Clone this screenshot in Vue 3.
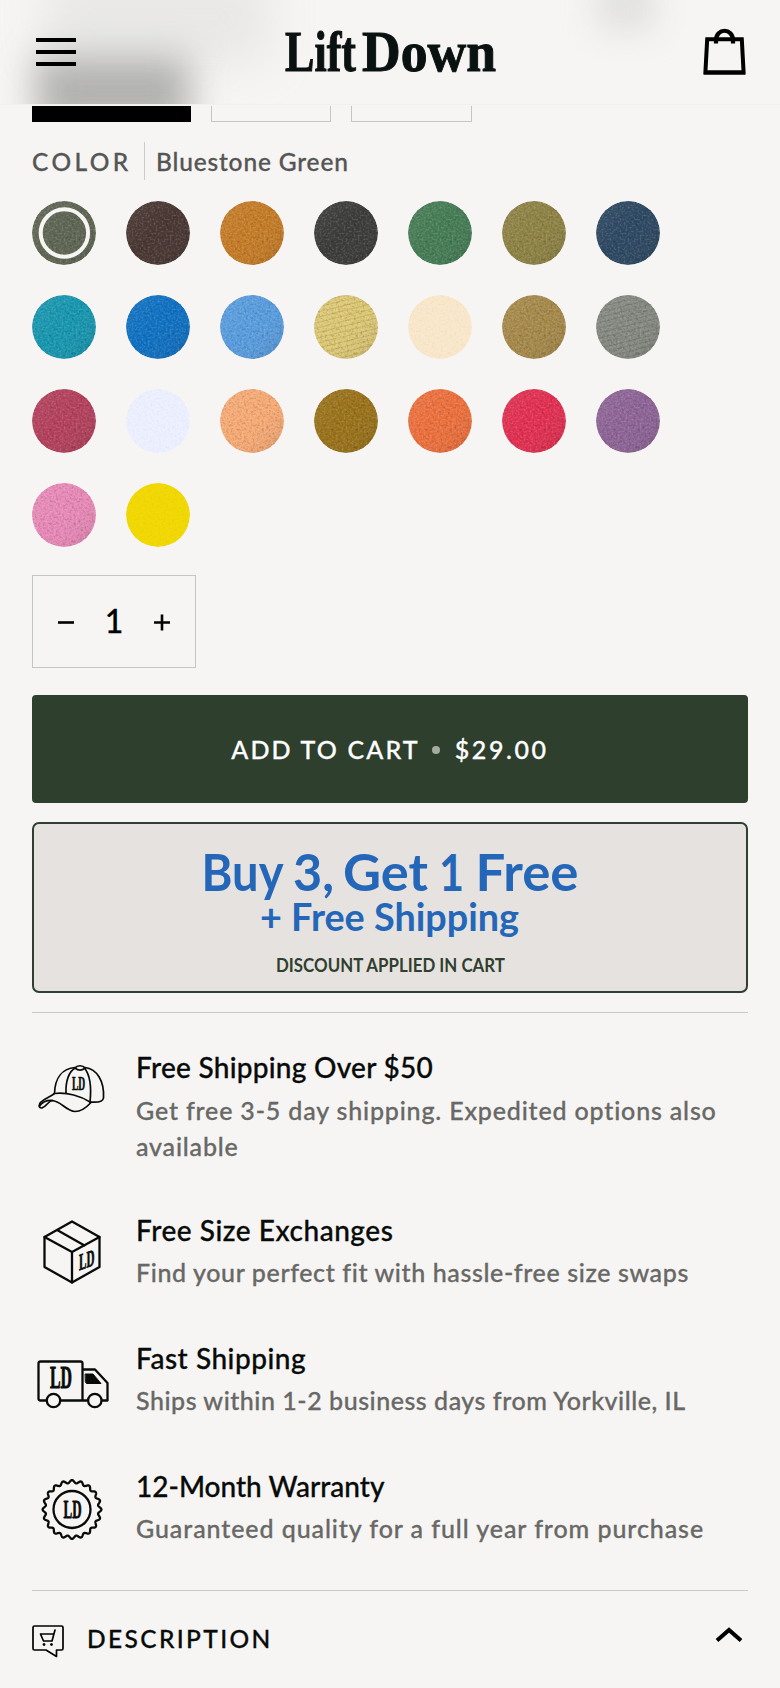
<script setup>
const swatches = [
  { name: 'Bluestone Green', color: '#5c6350', selected: true },
  { name: 'Brown', color: '#46332f' },
  { name: 'Burnt Orange', color: '#c67a22' },
  { name: 'Charcoal', color: '#383937' },
  { name: 'Green', color: '#427b52' },
  { name: 'Moss', color: '#8d8141' },
  { name: 'Navy', color: '#294560' },
  { name: 'Teal', color: '#1296b0' },
  { name: 'Royal', color: '#0a6fc3' },
  { name: 'Sky', color: '#569ce0' },
  { name: 'Butter', color: '#e0ca73', rib: true },
  { name: 'Ivory', color: '#fae8cd', pale: true },
  { name: 'Khaki', color: '#a68847' },
  { name: 'Grey', color: '#858980', rib: true },
  { name: 'Crimson', color: '#b43d5a' },
  { name: 'White', color: '#ecf0ff', pale: true },
  { name: 'Melon', color: '#f9aa73' },
  { name: 'Mustard', color: '#997015' },
  { name: 'Orange', color: '#ef6e39' },
  { name: 'Red', color: '#e42b4e' },
  { name: 'Violet', color: '#8d6296' },
  { name: 'Pink', color: '#ea88b8' },
  { name: 'Yellow', color: '#f2d905', pale: true },
]

const features = [
  { icon: 'cap', title: 'Free Shipping Over $50', text: 'Get free 3-5 day shipping. Expedited options also available' },
  { icon: 'box', title: 'Free Size Exchanges', text: 'Find your perfect fit with hassle-free size swaps' },
  { icon: 'truck', title: 'Fast Shipping', text: 'Ships within 1-2 business days from Yorkville, IL' },
  { icon: 'badge', title: '12-Month Warranty', text: 'Guaranteed quality for a full year from purchase' },
]

// Scalloped outline of the warranty badge.
const lobes = 20
const points = []
for (let i = 0; i < 360; i++) {
  const a = (i / 360) * Math.PI * 2
  const r = 27.9 + 1.5 * Math.cos(lobes * a)
  points.push(`${(40 + r * Math.cos(a)).toFixed(2)},${(40 + r * Math.sin(a)).toFixed(2)}`)
}
const scallop = points.join(' ')
</script>

<template>
  <div class="page">
    <svg class="defs" width="0" height="0" aria-hidden="true">
      <filter id="grain" x="0" y="0" width="100%" height="100%">
        <feTurbulence type="fractalNoise" baseFrequency="0.45" numOctaves="3" seed="4" />
        <feColorMatrix values="0 0 0 0 0  0 0 0 0 0  0 0 0 0 0  2.2 0 0 0 -0.95" />
      </filter>
      <filter id="glint" x="0" y="0" width="100%" height="100%">
        <feTurbulence type="fractalNoise" baseFrequency="0.5" numOctaves="2" seed="9" />
        <feColorMatrix values="0 0 0 0 1  0 0 0 0 1  0 0 0 0 1  0 2.2 0 0 -1" />
      </filter>
      <linearGradient id="shade" x1="0" y1="0" x2="1" y2="1">
        <stop offset="0" stop-color="#fff" stop-opacity=".08" />
        <stop offset=".5" stop-color="#fff" stop-opacity=".02" />
        <stop offset="1" stop-color="#000" stop-opacity=".12" />
      </linearGradient>
      <pattern id="ribs" width="12" height="5" patternUnits="userSpaceOnUse" patternTransform="rotate(-14)">
        <path d="M0 2.5H12" stroke="#000" stroke-width="1" stroke-opacity=".1" />
      </pattern>
      <clipPath id="round"><circle cx="32" cy="32" r="32" /></clipPath>
    </svg>

    <header class="header">
      <i class="haze haze-pill"></i>
      <i class="haze haze-top"></i>
      <i class="haze haze-right"></i>
      <button class="menu" aria-label="Menu"><span></span><span></span><span></span></button>
      <svg class="logo" width="220" height="90" viewBox="0 0 220 90">
        <text x="4" y="71" textLength="71" lengthAdjust="spacingAndGlyphs">Lift</text>
        <text x="81" y="71" textLength="134" lengthAdjust="spacingAndGlyphs">Down</text>
      </svg>
      <svg class="bag" width="44" height="48" viewBox="0 0 44 48" fill="none" stroke="#000">
        <path d="M4.2 11.2H38.8L40.6 44.5H2.4Z" stroke-width="4" />
        <path d="M1 44.6H42" stroke-width="4" />
        <path d="M13 15.5V12.5C13 -0.5 30 -0.5 30 12.5V15.5" stroke-width="4.2" />
      </svg>
    </header>

    <div class="sizes"><span class="on"></span><span></span><span></span></div>

    <main class="content">
      <div class="option">
        <span class="option-name">COLOR</span>
        <span class="option-value">Bluestone Green</span>
      </div>

      <div class="swatches">
        <svg v-for="s in swatches" :key="s.name" width="64" height="64" viewBox="0 0 64 64" :aria-label="s.name">
          <g clip-path="url(#round)">
            <circle cx="32" cy="32" r="32" :fill="s.color" />
            <g :opacity="s.pale ? 0.04 : 0.2">
              <rect width="64" height="64" filter="url(#grain)" />
              <rect width="64" height="64" filter="url(#glint)" />
            </g>
            <rect v-if="s.rib" width="64" height="64" fill="url(#ribs)" />
            <rect v-if="!s.pale" width="64" height="64" fill="url(#shade)" />
          </g>
          <circle v-if="s.selected" cx="32.4" cy="32" r="23.7" fill="none" stroke="#f6f5f3" stroke-width="4" />
        </svg>
      </div>

      <div class="quantity">
        <svg width="18" height="18" viewBox="0 0 18 18"><path d="M1 9.5H17" stroke="#000" stroke-width="2.6" /></svg>
        <span>1</span>
        <svg width="18" height="18" viewBox="0 0 18 18"><path d="M1 9.5H17M9 1.5V17.5" stroke="#000" stroke-width="2.6" /></svg>
      </div>

      <button class="cart">
        <span class="cart-label">ADD TO CART</span><i></i><span class="cart-price">$29.00</span>
      </button>

      <div class="promo">
        <svg width="712" height="167" viewBox="34 824 712 167">
          <g class="offer" font-size="51.5">
            <text x="201.5" y="890.5" textLength="82" lengthAdjust="spacingAndGlyphs">Buy</text>
            <text x="293" y="890.5" textLength="41" lengthAdjust="spacingAndGlyphs">3,</text>
            <text x="343" y="890.5" textLength="85" lengthAdjust="spacingAndGlyphs">Get</text>
            <text x="439" y="890.5" textLength="25" lengthAdjust="spacingAndGlyphs">1</text>
            <text x="475.5" y="890.5" textLength="103" lengthAdjust="spacingAndGlyphs">Free</text>
          </g>
          <text class="offer" x="260" y="931" font-size="37.5" textLength="259" lengthAdjust="spacingAndGlyphs">+ Free Shipping</text>
          <text class="note" x="276" y="971.5" font-size="18.6" textLength="229" lengthAdjust="spacingAndGlyphs">DISCOUNT APPLIED IN CART</text>
        </svg>
      </div>

      <section class="features">
        <article v-for="f in features" :key="f.icon" :class="['feature', f.icon]">
          <svg v-if="f.icon === 'cap'" class="icon" width="80" height="80" viewBox="0 1 80 80">
            <g stroke-width="1.7">
              <path d="M22.5 45.5C23 29 31 20.5 43 19.5" />
              <path d="M53 19.5C65 21 72.5 33 71.5 50C71 54 64 54.5 58.5 54" />
              <path d="M34 45C33.5 33 37 23 43.5 20" />
              <path d="M52.5 20C58 27 59.5 40 58 54" />
              <path d="M43 20C45 17 51 17 53 20C50 22.5 46 22.5 43 20Z" />
              <path d="M22.5 45.5C35 44 49 48 59 54.5C54 60 49 63.5 43 63.5C34 63 29 53 20 52.5C16 53.5 13.5 59.5 9.5 60C6.5 60 6.5 56 9 54C13 50 18 49 22.5 45.5Z" />
              <path d="M7.5 58C11 53 15 52 21 52.5" />
            </g>
            <g transform="translate(40 29.5) scale(.6)"><text y="21" textLength="22" lengthAdjust="spacingAndGlyphs">LD</text></g>
          </svg>
          <svg v-else-if="f.icon === 'box'" class="icon" width="80" height="80" viewBox="0 0 80 80">
            <g stroke-width="2.3">
              <path d="M40 9.5L67.5 25V55L40 70.5L12.5 55V25Z" />
              <path d="M12.5 25L40 40L67.5 25M40 40V70.5M26 18.5L52.5 33.5" />
            </g>
            <g transform="translate(47 42.5) skewY(-20) scale(.7 .76)"><text y="21" textLength="22" lengthAdjust="spacingAndGlyphs">LD</text></g>
          </svg>
          <svg v-else-if="f.icon === 'truck'" class="icon" width="80" height="80" viewBox="0 0 80 80">
            <g stroke-width="2.3">
              <path d="M14 60.5H8.5Q6.5 60.5 6.5 58.5V23.5Q6.5 21.5 8.5 21.5H48.5Q50.5 21.5 50.5 23.5V60.5H29M50.5 60.5H56M70 60.5H75.5V43L63 29.5H50.5" />
              <circle cx="21.5" cy="60.5" r="6.7" /><circle cx="62.8" cy="60.5" r="6.7" />
            </g>
            <path class="solid" d="M53.5 34H61L69 43.5H54.5L53.5 42Z" />
            <g transform="translate(18 27)"><text y="21" textLength="22" lengthAdjust="spacingAndGlyphs">LD</text></g>
          </svg>
          <svg v-else class="icon" width="80" height="80" viewBox="0 -1.5 80 80">
            <g stroke-width="2.3"><polygon :points="scallop" /><circle cx="40" cy="40" r="18.5" /></g>
            <g transform="translate(31.5 31.5) scale(.82)"><text y="21" textLength="22" lengthAdjust="spacingAndGlyphs">LD</text></g>
          </svg>
          <div class="copy">
            <h3>{{ f.title }}</h3>
            <p>{{ f.text }}</p>
          </div>
        </article>
      </section>

      <div class="accordion">
        <svg class="bubble" width="32" height="34" viewBox="0 0 32 34" fill="none" stroke="#000" stroke-width="1.7" stroke-linejoin="round">
          <path d="M2.5 1H29.5Q31 1 31 2.5V23.5Q31 25 29.5 25H24.5V31.5L14 25H2.5Q1 25 1 23.5V2.5Q1 1 2.5 1Z" />
          <path d="M23 5L20 16H11.5L8.5 9H21.5" stroke-linecap="round" />
          <circle cx="12" cy="19.5" r="1" fill="#000" stroke-width="1" /><circle cx="19.5" cy="19.5" r="1" fill="#000" stroke-width="1" />
        </svg>
        <span>DESCRIPTION</span>
        <svg class="chevron" width="28" height="16" viewBox="0 0 28 16"><path d="M2 13.5L14 3L26 13.5" fill="none" stroke="#000" stroke-width="4" /></svg>
      </div>
    </main>
  </div>
</template>

<style>
body { background: #f6f5f3; }
</style>

<style scoped>
* { box-sizing: border-box; }
.page { width: 780px; height: 1688px; overflow: hidden; background: #f6f5f3; color: #080b0a; font-family: Lato, "Liberation Sans", sans-serif; font-weight: 500; font-size: 25px; -webkit-text-stroke: .3px currentColor; }
.defs { position: absolute; }
button { border: 0; padding: 0; font: inherit; background: none; }
.header { position: relative; overflow: hidden; height: 105px; padding: 0 33px 0 36px; display: flex; justify-content: space-between; align-items: flex-start; border-bottom: 1px solid #f1f0ee; }
.haze { position: absolute; }
.haze-pill { left: 36px; top: 54px; width: 154px; height: 74px; background: #737372; filter: blur(18px); opacity: .52; }
.haze-top { left: 45px; top: -30px; width: 225px; height: 94px; background: #d2d2d0; filter: blur(22px); opacity: .36; }
.haze-right { left: 596px; top: -30px; width: 60px; height: 62px; background: #cfcfcd; filter: blur(16px); opacity: .5; }
.menu { position: relative; width: 40px; margin-top: 38px; display: grid; gap: 8px; }
.menu span { height: 4px; background: #000; }
.logo { position: relative; margin-left: 3px; }
.logo text { font: bold 58px "Liberation Serif", serif; fill: #0a1111; stroke: #0a1111; -webkit-text-stroke: .7px #0a1111; }
.bag { position: relative; margin-top: 28px; }
.sizes { display: flex; gap: 20px; padding: 1px 0 0 32px; height: 17px; }
.sizes span { width: 120.5px; border: solid #c5c5c3; border-width: 0 1.5px 1.5px; }
.sizes .on { width: 158.5px; background: #000; border: 0; }
.content { padding: 20px 32px 0; }
.option { display: flex; height: 38px; line-height: 40px; color: #555; font-size: 24.5px; }
.option-name { width: 113px; border-right: 1.5px solid #ccccca; letter-spacing: 3.4px; }
.option-value { padding-left: 11px; letter-spacing: .83px; }
.swatches { display: grid; grid-template-columns: repeat(7, 64px); gap: 30px; margin-top: 21px; }
.quantity { margin-top: 28px; width: 164px; height: 93px; border: 1.5px solid #c5c5c3; display: flex; align-items: center; justify-content: space-between; padding: 1px 24px 0; color: #000; }
.quantity span { font-size: 32px; line-height: 40px; margin-top: -3px; }
.cart { margin-top: 27px; width: 716px; height: 108px; border-radius: 4px; background: #2f3f2e; color: #fff; display: flex; justify-content: center; align-items: center; }
.cart-label { letter-spacing: 2.15px; }
.cart i { width: 8px; height: 8px; border-radius: 50%; background: #a4aca2; margin: 1px 15px 0 12px; }
.cart-price { letter-spacing: 2.6px; }
.promo { margin-top: 19px; height: 171px; border: 2px solid #2f3f33; border-radius: 7px; background: #e6e2df; overflow: hidden; }
.promo svg { display: block; }
.promo text { font-family: Lato, sans-serif; font-weight: 700; }
.offer { fill: #2467b9; -webkit-text-stroke: 1.3px #2467b9; }
.note { fill: #2f3f30; -webkit-text-stroke: .3px #2f3f30; }
.features { margin-top: 19px; height: 579px; border-top: 1.5px solid #c9c9c7; border-bottom: 1.5px solid #c9c9c7; padding-top: 36px; display: flex; flex-direction: column; gap: 49px; }
.feature { display: flex; gap: 24px; height: 79px; }
.feature.cap { height: 114px; }
.icon { flex: none; fill: none; stroke: #080b0a; stroke-linejoin: round; stroke-linecap: round; }
.icon text { fill: #080b0a; font-family: "Liberation Serif", serif; font-size: 31px; font-weight: 700; -webkit-text-stroke: .9px #080b0a; }
.icon .solid { fill: #080b0a; }
h3, p { margin: 0; font-weight: 500; line-height: 36px; }
h3 { font-size: 28px; }
p { margin-top: 6px; font-size: 25px; color: #686866; }
.cap h3 { letter-spacing: .27px; }
.cap p { margin-top: 7px; letter-spacing: .83px; }
.box h3 { letter-spacing: .54px; }
.box p { letter-spacing: .62px; }
.truck h3 { letter-spacing: .53px; }
.truck p { letter-spacing: .53px; }
.badge p { letter-spacing: .92px; }
.accordion { display: flex; align-items: center; padding-top: 31px; height: 66px; letter-spacing: 2.38px; font-size: 24.5px; line-height: 34px; }
.bubble { margin-top: 4px; }
.accordion span { margin: -2px 0 0 23px; }
.chevron { margin: -9px 5px 0 auto; }
</style>
